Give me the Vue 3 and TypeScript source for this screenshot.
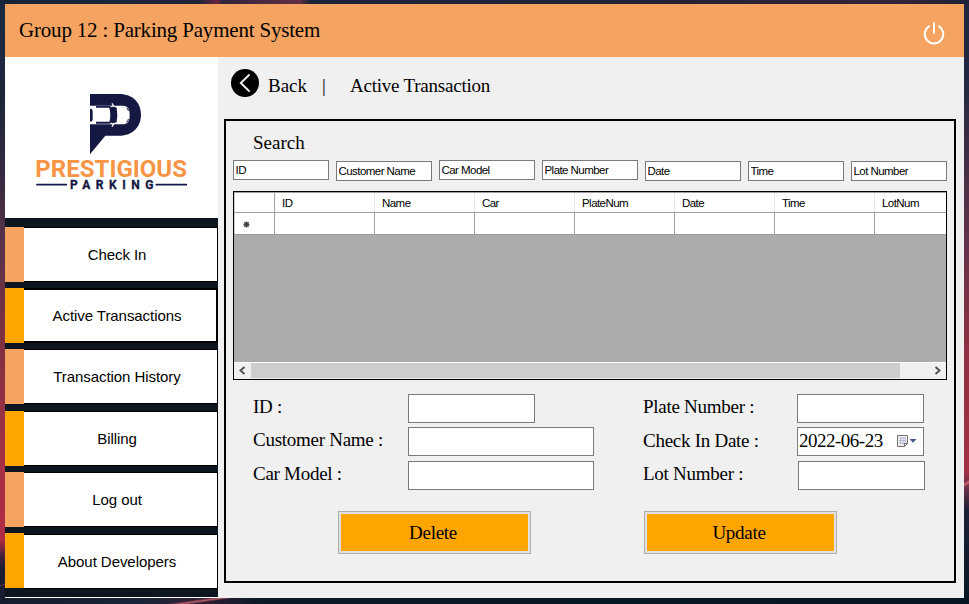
<script setup lang="ts">
import { ref } from 'vue'

interface NavItem { label: string; tone: string; active?: boolean }
interface SearchField { text: string; low: boolean }

const nav: NavItem[] = [
  { label: 'Check In', tone: 'sandy' },
  { label: 'Active Transactions', tone: 'orange', active: true },
  { label: 'Transaction History', tone: 'sandy' },
  { label: 'Billing', tone: 'orange' },
  { label: 'Log out', tone: 'sandy' },
  { label: 'About Developers', tone: 'orange' },
]

const search = ref<SearchField[]>([
  { text: 'ID', low: false },
  { text: 'Customer Name', low: true },
  { text: 'Car Model', low: false },
  { text: 'Plate Number', low: false },
  { text: 'Date', low: true },
  { text: 'Time', low: true },
  { text: 'Lot Number', low: true },
])

const columns: string[] = ['ID', 'Name', 'Car', 'PlateNum', 'Date', 'Time', 'LotNum']
const checkInDate = ref('2022-06-23')
</script>

<template>
  <div class="desktop">
    <div class="window">
      <header class="titlebar">
        <span class="title">Group 12 : Parking Payment System</span>
        <svg class="power" width="22" height="24" viewBox="0 0 22 24">
          <path d="M6.2 5.2A9.3 9.3 0 1 0 15.8 5.2M11 2v10" fill="none" stroke="#fff" stroke-width="1.9" stroke-linecap="round" />
        </svg>
      </header>
      <div class="body">
        <aside class="sidebar">
          <div class="logo">
            <svg width="190" height="120" viewBox="0 0 570 360">
              <path d="M210 42H298C338 42 363 68 363 104S338 167 298 167H256L210 223Z" fill="#141843" />
              <path d="M209 77H306C323 77 329 84 329 105S323 133 306 133H209Z" fill="#fff" />
              <path d="M210 86q8 0 8 6v27q0 6-8 6ZM228 78h42l5 5h-47ZM228 125h47l-5 6h-42ZM268 83q12-5 22 0 4 22 0 44-10 5-22 0 6-22 0-44Z" fill="#141843" />
              <path d="M276 70l5 9M276 140l5-9" stroke="#fff" stroke-width="4" />
              <path d="M319 83q6 2 6 10M319 127q6-2 6-10" stroke="#141843" stroke-width="3" fill="none" />
              <text class="brand" x="46" y="292" textLength="455" lengthAdjust="spacingAndGlyphs">PRESTIGIOUS</text>
              <text class="brand-sub" x="150" y="327" textLength="250" lengthAdjust="spacing">PARKING</text>
              <path d="M51 314H139M409 314H499" stroke="#141843" stroke-width="5" stroke-linecap="round" />
            </svg>
          </div>
          <nav class="nav">
            <div v-for="item in nav" :key="item.label" class="nav-row">
              <span class="accent" :class="item.tone"></span>
              <button class="nav-button" :class="{ active: item.active }">{{ item.label }}</button>
            </div>
          </nav>
        </aside>
        <main class="content">
          <div class="crumbs">
            <svg class="back-icon" width="28" height="28" viewBox="0 0 28 28">
              <circle cx="14" cy="14" r="14" />
              <path d="M18 6L9.8 14L18 22" fill="none" stroke="#f0f0f0" stroke-width="1.9" stroke-linecap="round" />
            </svg>
            <span class="back">Back</span>
            <span class="bar">|</span>
            <span class="page">Active Transaction</span>
          </div>
          <section class="panel">
            <h2>Search</h2>
            <div class="search">
              <input v-for="f in search" :key="f.text" v-model="f.text" :class="{ low: f.low }" />
            </div>
            <div class="grid">
              <div class="grid-head">
                <span class="corner"></span>
                <span v-for="c in columns" :key="c" class="head-cell">{{ c }}</span>
              </div>
              <div class="grid-row">
                <span class="corner">
                  <svg width="7" height="7" viewBox="0 0 7 7"><path d="M3.5 .5v6M.5 3.5h6M1.3 1.3l4.4 4.4M5.7 1.3L1.3 5.7" stroke="#444" stroke-width="1.4" /></svg>
                </span>
                <span v-for="c in columns" :key="c" class="cell"></span>
              </div>
              <div class="scroll">
                <svg width="17" height="15" viewBox="0 0 17 15"><path d="M10.5 4L6.5 7.5L10.5 11" fill="none" stroke="#505050" stroke-width="1.9" /></svg>
                <span class="thumb"></span>
                <svg width="17" height="15" viewBox="0 0 17 15"><path d="M6.5 4L10.5 7.5L6.5 11" fill="none" stroke="#505050" stroke-width="1.9" /></svg>
              </div>
            </div>
            <div class="form">
              <div class="col">
                <label class="row"><span>ID :</span><input class="short" /></label>
                <label class="row"><span>Customer Name :</span><input class="long" /></label>
                <label class="row last"><span>Car Model :</span><input class="long" /></label>
                <button class="action">Delete</button>
              </div>
              <div class="col right">
                <label class="row"><span>Plate Number :</span><input class="short" /></label>
                <div class="row date-row">
                  <span>Check In Date :</span>
                  <div class="date">
                    <b>{{ checkInDate }}</b>
                    <svg width="22" height="14" viewBox="0 0 22 14">
                      <path d="M1.5 1.5h10v8l-3 3h-7Z" fill="#f2f2fa" stroke="#77706f" />
                      <path d="M3 4h7M3 6.5h7M3 9h6M4.5 3v8M7 3v8M9.2 3v6" stroke="#a6acc2" stroke-width=".7" />
                      <path d="M8.5 12.5v-3h3" fill="none" stroke="#77706f" />
                      <path d="M13.5 5h7L17 8.8Z" fill="#43598c" />
                    </svg>
                  </div>
                </div>
                <label class="row last"><span>Lot Number :</span><input class="short nudge" /></label>
                <button class="action">Update</button>
              </div>
            </div>
          </section>
        </main>
      </div>
    </div>
  </div>
</template>

<style>
body { margin: 0; overflow: hidden; }
</style>

<style scoped>
* { box-sizing: border-box; }
.desktop {
  width: 969px; height: 604px; padding: 4px 5px 6px;
  font-family: "Liberation Serif", "Times New Roman", serif; font-size: 19px; color: #000;
  background:
    linear-gradient(172deg, transparent 40%, #8d4250 47%, #b9616b 50%, transparent 60%) 150px 598px / 100px 6px no-repeat,
    linear-gradient(172deg, transparent 40%, #8d4250 50%, transparent 60%) 0 582px / 5px 6px no-repeat,
    linear-gradient(150deg, transparent 35%, #d06670 46%, #74384a 60%, transparent 75%) 964px 475px / 5px 18px no-repeat,
    linear-gradient(90deg, #172337 0, #20253a 200px, #6b2440 218px, #30243c 222px, #622f44 300px, #1c2439 310px, #232238 640px, #352337 900px, #1c2339 969px) 0 0 / 969px 4px no-repeat,
    linear-gradient(90deg, #141e2e 0, #172538 140px, #301f32 200px, #0b1a27 260px, #071923 600px, #061622 969px) 0 598px / 969px 6px no-repeat,
    linear-gradient(#192a40 0, #1c263b 100px, #33293f 170px, #56324a 240px, #7c3041 330px, #a23045 450px, #b12b44 540px, #42233a 556px, #1a1d31 570px, #181c2c) 0 0 / 5px 604px no-repeat,
    linear-gradient(#202640 0, #202941 80px, #493046 180px, #61324a 240px, #8e3042 350px, #a13144 470px, #642f43 490px, #1d2138 510px, #061721) 964px 0 / 5px 604px no-repeat;
}
.window { width: 959px; height: 594px; display: flex; flex-direction: column; background: #f0f0f0; }
.titlebar { height: 53px; flex: none; background: #f4a460; display: flex; justify-content: space-between; align-items: flex-start; padding: 14px 19px 0 14px; }
.title { font-size: 21px; line-height: 24px; white-space: nowrap; letter-spacing: -.19px; }
.power { margin-top: 3px; }
.body { flex: 1; display: flex; }
.sidebar { width: 213px; height: 541px; background: #0c1520; border-bottom: 1px solid #fff; }
.logo { height: 161px; background: #fff; padding: 23px 0 0 15px; }
.logo svg { display: block; }
.brand { font: 700 72px Roboto, sans-serif; fill: #f79545; }
.brand-sub { font: 700 36px Roboto, sans-serif; fill: #141843; stroke: #141843; stroke-width: 1; }
.nav { padding-top: 9px; display: grid; gap: 6px; }
.nav-row { display: flex; height: 55px; }
.nav-row:nth-child(4) { margin-top: 1px; }
.accent { width: 19px; }
.sandy { background: #f4a460; }
.orange { background: #ffa500; }
.nav-button { width: 194px; height: 55px; background: #fff; border: solid #000; border-width: 1px 1px 1px 0; padding: 0 7px 0 0; font: 15px "Liberation Sans", Arial, sans-serif; letter-spacing: -.06px; color: #000; }
.nav-button.active { border-width: 2px 2px 2px 0; padding-right: 6px; }
.nav-row:last-child .nav-button { margin-top: 1px; }
.content { flex: 1; padding: 0 8px 0 6px; }
.crumbs { height: 62px; display: flex; padding: 12px 0 0 7px; line-height: 22px; white-space: nowrap; }
.crumbs span { margin-top: 6px; }
.back { margin-left: 9px; width: 54px; }
.bar { width: 28px; }
.page { letter-spacing: -.22px; }
.panel { width: 732px; height: 464px; border: 2px solid #000; padding: 0 7px; }
h2 { margin: 0; padding: 11px 0 0 20px; height: 39px; font-size: 19px; line-height: 22px; font-weight: 400; }
.search { display: flex; gap: 7px; height: 31px; align-items: flex-start; }
input { border: 1px solid #7a7a7a; background: #fff; outline: 0; border-radius: 0; padding: 0 2px; }
.search input { width: 96px; height: 20px; padding: 0 0 1px 1.5px; font: 11.5px "Liberation Sans", Arial, sans-serif; letter-spacing: -.55px; color: #000; }
.search .low { margin-top: 1px; }
.grid { width: 714px; height: 189px; border: 1px solid #000; background: #ababab; overflow: hidden; display: flex; flex-direction: column; font: 11.5px "Liberation Sans", Arial, sans-serif; letter-spacing: -.55px; }
.grid-head, .grid-row { display: flex; flex: none; background: #fff; border-bottom: 1px solid #a0a0a0; }
.grid-head { height: 21px; border-top: 1px solid #a0a0a0; }
.grid-row { height: 22px; }
.corner { width: 41px; flex: none; border: solid #a0a0a0; border-width: 0 1px; display: flex; align-items: center; padding: 2px 0 0 8px; border-left-color: #d0d0d0; }
.head-cell, .cell { width: 100px; flex: none; }
.head-cell { padding-left: 7px; line-height: 20px; border-right: 1px solid #e5e5e5; }
.cell { border-right: 1px solid #a0a0a0; }
.scroll { height: 17px; margin-top: auto; background: #f0f0f0; border-top: 1px solid #fff; display: flex; justify-content: space-between; }
.thumb { width: 649px; height: 15px; background: #cdcdcd; margin-right: auto; }
.form { display: flex; padding: 14px 0 0 20px; }
.col { width: 390px; }
.right { width: 290px; }
.row { display: flex; height: 29px; margin-bottom: 4px; line-height: 22px; }
.row span { width: 155px; padding-top: 2px; white-space: nowrap; letter-spacing: -.27px; }
.right .row span { width: 154px; }
.right .date-row span { padding-top: 3px; }
.row.last { margin: 5px 0 21px; }
.row input { height: 29px; }
.short { width: 127px; }
.long { width: 186px; }
.row .nudge { margin-left: 1px; }
.date { width: 127px; height: 29px; border: 1px solid #7a7a7a; background: #fff; display: flex; justify-content: space-between; padding: 2px 5px 0 1px; }
.date b { font-weight: 400; letter-spacing: -.5px; }
.date svg { margin-top: 4px; }
.action { display: block; width: 193px; height: 43px; margin-left: 85px; border: 1px solid #adadad; box-shadow: inset 0 0 0 2px #e1e1e1; background: #ffa500; font: 19px "Liberation Serif", serif; letter-spacing: -.3px; color: #000; padding: 0 3px 0 0; }
.right .action { margin-left: 1px; }
</style>
